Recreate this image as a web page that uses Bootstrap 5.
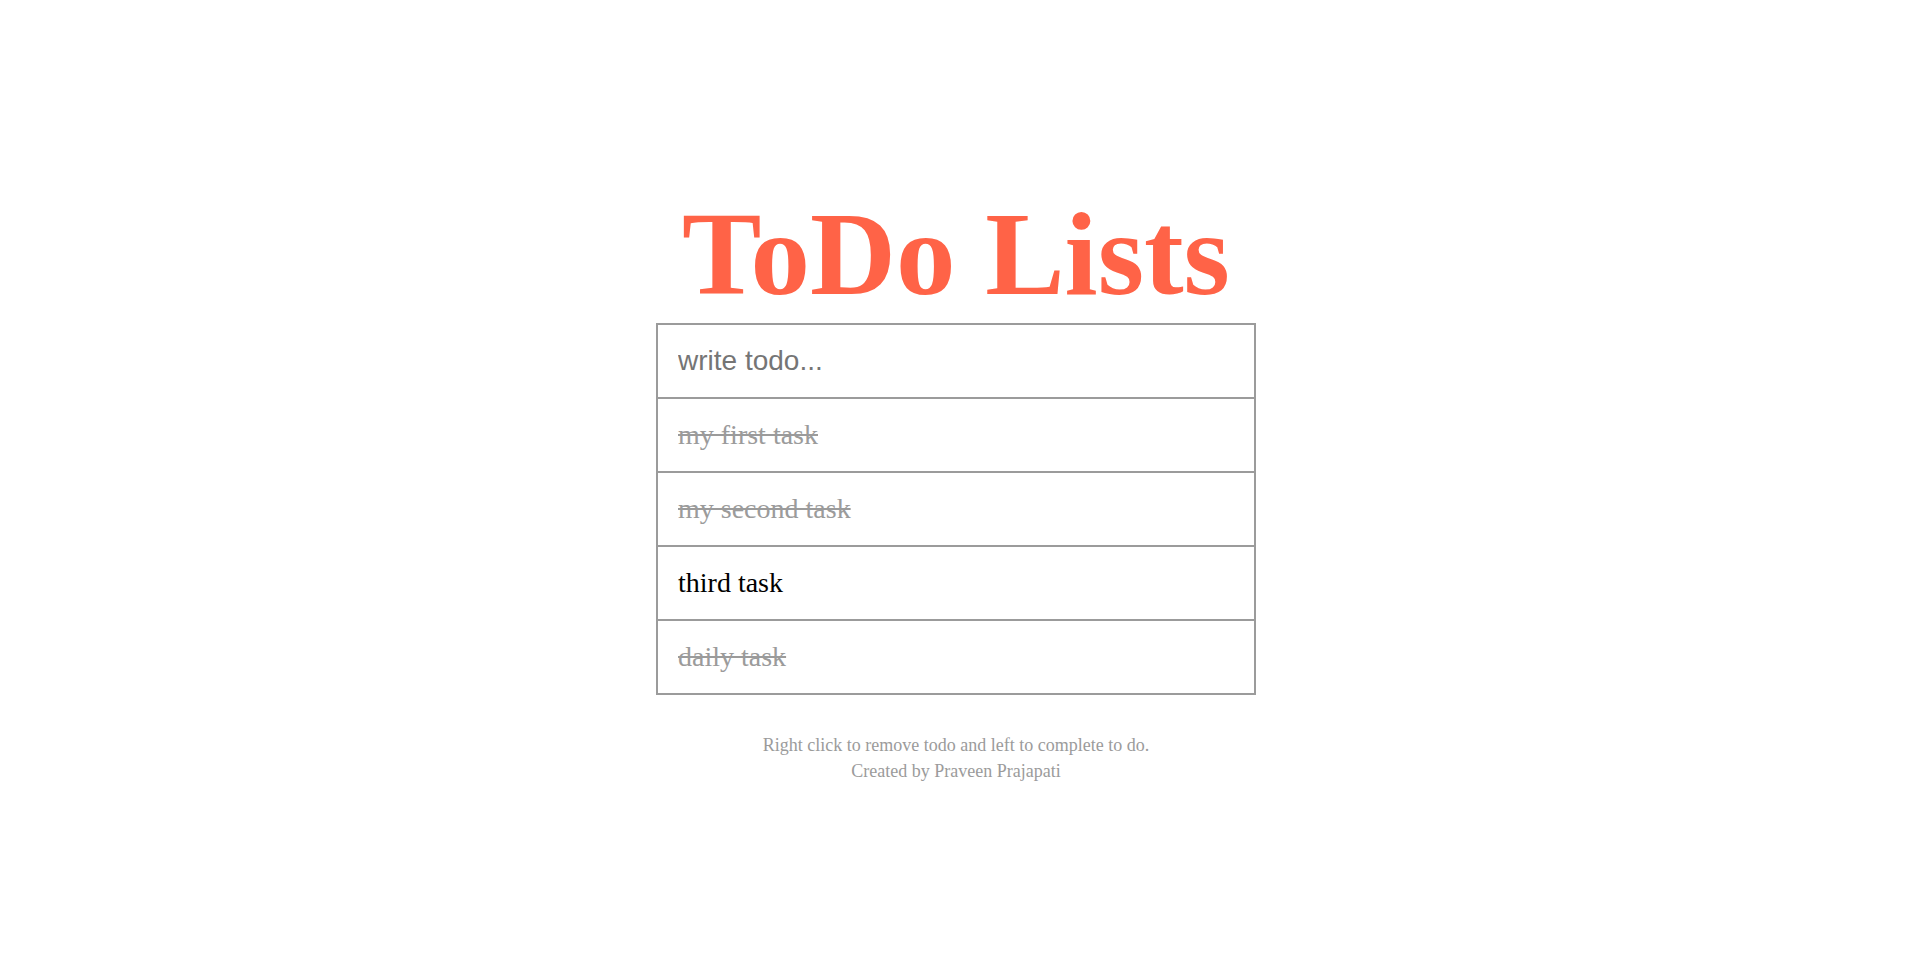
<!DOCTYPE html>
<html lang="en">
<head>
<meta charset="utf-8">
<meta name="viewport" content="width=device-width, initial-scale=1">
<title>ToDo Lists</title>
<link href="https://cdn.jsdelivr.net/npm/bootstrap@5.3.0/dist/css/bootstrap.min.css" rel="stylesheet">
<style>
body { font-family: "Liberation Serif", serif; color: #000; }
.todo-app { max-width: 600px; }
.todo-title { font-size: 119px; line-height: 137px; font-weight: 700; color: tomato; }
.todo-box { border: 2px solid #9b9b9b; }
.todo-input { font-family: "Liberation Sans", sans-serif; font-size: 28px; line-height: 32px; padding: 20px; color: #000; }
.todo-input::placeholder { color: #757575; }
.todo-item { font-size: 28px; line-height: 32px; padding: 20px; border-top: 2px solid #9b9b9b; }
.todo-done { color: #9b9b9b; text-decoration: line-through; }
.todo-help { font-size: 18px; line-height: 26px; color: #9b9b9b; margin-top: 37px; }
</style>
</head>
<body class="min-vh-100 d-flex flex-column justify-content-center">
<main class="todo-app w-100 mx-auto">
  <h1 class="todo-title text-center text-nowrap pt-1 mb-0">ToDo Lists</h1>
  <form class="todo-box">
    <input class="todo-input form-control border-0 rounded-0 shadow-none" type="text" placeholder="write todo..." aria-label="New todo">
    <ul class="list-unstyled mb-0">
      <li class="todo-item todo-done">my first task</li>
      <li class="todo-item todo-done">my second task</li>
      <li class="todo-item">third task</li>
      <li class="todo-item todo-done">daily task</li>
    </ul>
  </form>
  <p class="todo-help text-center mb-0">Right click to remove todo and left to complete to do.<br>Created by Praveen Prajapati</p>
</main>
<script src="https://cdn.jsdelivr.net/npm/bootstrap@5.3.0/dist/js/bootstrap.bundle.min.js"></script>
</body>
</html>
